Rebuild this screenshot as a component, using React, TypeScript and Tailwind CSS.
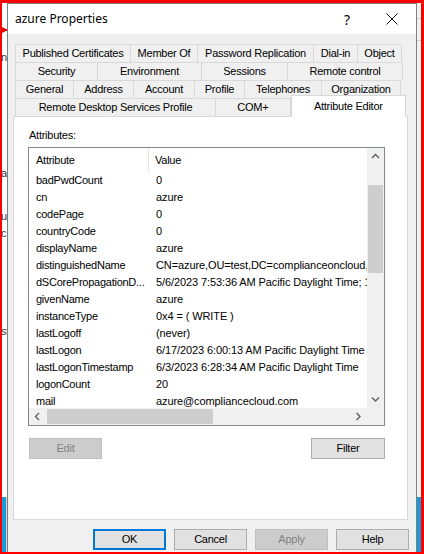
import React from "react";

const rows: [string, string][] = [
  ["badPwdCount", "0"],
  ["cn", "azure"],
  ["codePage", "0"],
  ["countryCode", "0"],
  ["displayName", "azure"],
  ["distinguishedName", "CN=azure,OU=test,DC=complianceoncloud,DC=com"],
  ["dSCorePropagationD...", "5/6/2023 7:53:36 AM Pacific Daylight Time; 1/1/1601 12:00:00 AM"],
  ["givenName", "azure"],
  ["instanceType", "0x4 = ( WRITE )"],
  ["lastLogoff", "(never)"],
  ["lastLogon", "6/17/2023 6:00:13 AM Pacific Daylight Time"],
  ["lastLogonTimestamp", "6/3/2023 6:28:34 AM Pacific Daylight Time"],
  ["logonCount", "20"],
  ["mail", "azure@compliancecloud.com"],
];

type Tab = { label: string; w: number };

const tabRows: Tab[][] = [
  [
    { label: "Published Certificates", w: 116 },
    { label: "Member Of", w: 68 },
    { label: "Password Replication", w: 117 },
    { label: "Dial-in", w: 45 },
    { label: "Object", w: 45 },
  ],
  [
    { label: "Security", w: 83 },
    { label: "Environment", w: 105 },
    { label: "Sessions", w: 87 },
    { label: "Remote control", w: 116 },
  ],
  [
    { label: "General", w: 59 },
    { label: "Address", w: 61 },
    { label: "Account", w: 62 },
    { label: "Profile", w: 51 },
    { label: "Telephones", w: 78 },
    { label: "Organization", w: 80 },
  ],
];

function Chevron({ dir }: { dir: "up" | "down" | "left" | "right" }) {
  const d = {
    up: "M1 5 L4.5 1.5 L8 5",
    down: "M1 1.5 L4.5 5 L8 1.5",
    left: "M5 1 L1.5 4.5 L5 8",
    right: "M1.5 1 L5 4.5 L1.5 8",
  }[dir];
  const vert = dir === "up" || dir === "down";
  return (
    <svg width={vert ? 9 : 7} height={vert ? 7 : 9} viewBox={vert ? "0 0 9 7" : "0 0 7 9"}>
      <path d={d} fill="none" stroke="#606060" strokeWidth="1.4" />
    </svg>
  );
}

export default function App() {
  return (
    <div className="relative w-[424px] h-[554px] overflow-hidden bg-white font-['Liberation_Sans',Arial,sans-serif] text-[11px] text-black tracking-[-0.25px]">
      {/* background desktop windows */}
      <div className="absolute left-0 top-[22px] w-[8px] h-[16px]">
        <svg width="8" height="16" viewBox="0 0 8 16">
          <path d="M0 4 L8 8 L0 12 Z" fill="#e00000" />
          <rect x="0" y="7" width="8" height="2" fill="#e00000" />
        </svg>
      </div>
      <div className="absolute left-[1px] top-[49px] text-[11px] text-[#333]">n</div>
      <div className="absolute left-[1px] top-[165px] text-[11px] text-[#333]">al</div>
      <div className="absolute left-[1px] top-[208px] text-[11px] text-[#333]">u</div>
      <div className="absolute left-[1px] top-[225px] text-[11px] text-[#333]">c</div>
      <div className="absolute left-[1px] top-[323px] text-[11px] text-[#333]">st</div>
      <div className="absolute left-0 top-[497px] w-[7px] h-[57px] bg-[#1a9ad6] border-r border-[#d0d0d0]" />
      <div className="absolute left-[416px] top-0 w-[8px] h-[554px] bg-[#f3f3f3] border-l border-[#d8d8d8]" />
      <div className="absolute left-[416px] top-[18px] w-[8px] h-px bg-[#cfcfcf]" />
      <div className="absolute left-[416px] top-[40px] w-[8px] h-px bg-[#cfcfcf]" />
      <div className="absolute left-[417px] top-[497px] w-[7px] h-[57px] bg-[#1a9ad6]" />

      {/* dialog window */}
      <div className="absolute left-[7px] top-[3px] w-[410px] h-[560px] border border-[#7f7f7f] bg-[#f0f0f0] flex flex-col">
        {/* title bar */}
        <div className="h-[30px] bg-white flex items-center pl-[7px] pr-[12px] shrink-0">
          <span className="text-[12px] tracking-[0px] font-['Noto_Sans',sans-serif] text-[#000]">azure Properties</span>
          <span className="ml-auto mr-[36px] text-[14px] font-['Noto_Sans',sans-serif] tracking-[0px]">?</span>
          <svg width="12" height="12" viewBox="0 0 12 12" className="mr-[6px]">
            <path d="M0.5 0.5 L11.5 11.5 M11.5 0.5 L0.5 11.5" stroke="#111" strokeWidth="1" />
          </svg>
        </div>

        <div className="pt-[10px] pl-[5px]">
          {/* tabs */}
          <div className="pl-[2px] w-[393px] flex flex-col">
            {tabRows.map((row, i) => (
              <div key={i} className="flex h-[18px]">
                {row.map((t) => (
                  <div
                    key={t.label}
                    style={{ width: t.w }}
                    className="h-[18px] border-t border-l border-r border-[#d9d9d9] bg-[#f0f0f0] flex items-center justify-center whitespace-nowrap -mr-px"
                  >
                    {t.label}
                  </div>
                ))}
              </div>
            ))}
            <div className="flex h-[18px] items-end">
              <div className="w-[202px] h-[18px] border-t border-l border-r border-[#d9d9d9] bg-[#f0f0f0] flex items-center justify-center whitespace-nowrap -mr-px">
                Remote Desktop Services Profile
              </div>
              <div className="w-[76px] h-[18px] border-t border-l border-r border-[#d9d9d9] bg-[#f0f0f0] flex items-center justify-center whitespace-nowrap">
                COM+
              </div>
              <div className="relative z-10 w-[116px] h-[22px] -mb-px border-t border-l border-r border-[#d9d9d9] bg-white flex items-start pt-[2px] justify-center whitespace-nowrap">
                Attribute Editor
              </div>
            </div>
          </div>

          {/* panel */}
          <div className="w-[395px] h-[404px] bg-white border border-[#d9d9d9] pt-[11px] pl-[14px] flex flex-col">
            <div className="h-[14px] leading-[14px] pl-[1px]">Attributes:</div>
            <div className="mt-[5px] w-[357px] h-[279px] border border-[#828790] flex flex-col">
              <div className="flex h-[260px]">
                <div className="w-[338px] h-[260px] overflow-hidden">
                  <div className="flex h-[24px] items-center">
                    <div className="w-[120px] pl-[7px] h-[24px] flex items-center border-r border-[#e5e5e5]">Attribute</div>
                    <div className="pl-[6px]">Value</div>
                  </div>
                  {rows.map(([k, v]) => (
                    <div key={k} className="flex h-[17px] items-center whitespace-nowrap">
                      <div className="w-[120px] shrink-0 pl-[7px]">{k}</div>
                      <div className="pl-[7px] tracking-[-0.1px]">{v}</div>
                    </div>
                  ))}
                </div>
                <div className="w-[17px] h-[260px] bg-[#f0f0f0] flex flex-col items-center">
                  <div className="h-[17px] flex items-center justify-center">
                    <Chevron dir="up" />
                  </div>
                  <div className="mt-[20px] w-[15px] h-[88px] bg-[#cdcdcd]" />
                  <div className="mt-auto h-[17px] flex items-center justify-center">
                    <Chevron dir="down" />
                  </div>
                </div>
              </div>
              <div className="flex h-[17px]">
                <div className="w-[338px] h-[17px] bg-[#f0f0f0] flex items-center">
                  <div className="w-[17px] flex items-center justify-center">
                    <Chevron dir="left" />
                  </div>
                  <div className="ml-px w-[166px] h-[15px] bg-[#cdcdcd]" />
                  <div className="ml-auto w-[17px] flex items-center justify-center">
                    <Chevron dir="right" />
                  </div>
                </div>
                <div className="w-[17px] h-[17px] bg-[#f0f0f0]" />
              </div>
            </div>
            <div className="mt-[12px] w-[357px] flex justify-between">
              <div className="ml-[1px] w-[73px] h-[21px] bg-[#cccccc] border border-[#bfbfbf] text-[#838383] flex items-center justify-center">
                Edit
              </div>
              <div className="w-[74px] h-[21px] bg-[#e1e1e1] border border-[#adadad] flex items-center justify-center">
                Filter
              </div>
            </div>
          </div>
        </div>

        {/* bottom buttons */}
        <div className="mt-[9px] flex gap-[8px] pl-[85px]">
          <div className="w-[73px] h-[21px] bg-[#e1e1e1] border-2 border-[#0078d7] flex items-center justify-center">OK</div>
          <div className="w-[73px] h-[21px] bg-[#e1e1e1] border border-[#adadad] flex items-center justify-center">Cancel</div>
          <div className="w-[73px] h-[21px] bg-[#cccccc] border border-[#bfbfbf] text-[#838383] flex items-center justify-center">Apply</div>
          <div className="w-[73px] h-[21px] bg-[#e1e1e1] border border-[#adadad] flex items-center justify-center">Help</div>
        </div>
      </div>

      {/* red annotation frame */}
      <div className="absolute inset-0 pointer-events-none border-l-2 border-t-[3px] border-r-[3px] border-b-2 border-[#ff0000]" />
    </div>
  );
}
